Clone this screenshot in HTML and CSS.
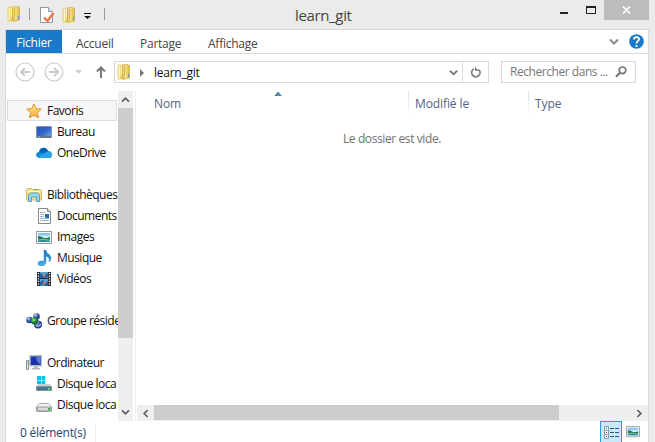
FILE: index.html
```html
<!DOCTYPE html>
<html lang="fr">
<head>
<meta charset="utf-8">
<title>learn_git</title>
<link rel="stylesheet" href="styles.css">
</head>
<body>
<svg class="defs" aria-hidden="true">
  <defs>
    <linearGradient id="gold" x2="1"><stop stop-color="#f8e9a2"/><stop offset=".6" stop-color="#efd570"/><stop offset="1" stop-color="#d9b445"/></linearGradient>
    <linearGradient id="screen" x2="1" y2="1"><stop stop-color="#2856b5"/><stop offset=".5" stop-color="#2f66c8"/><stop offset="1" stop-color="#7fb0e4"/></linearGradient>
    <linearGradient id="land" x2="0" y2="1"><stop stop-color="#6db7ee"/><stop offset=".5" stop-color="#e2f4fa"/><stop offset=".52" stop-color="#27714c"/><stop offset=".72" stop-color="#378e67"/><stop offset="1" stop-color="#2686b8"/></linearGradient>
    <linearGradient id="star" x2="0" y2="1"><stop stop-color="#fff29a"/><stop offset="1" stop-color="#f9a832"/></linearGradient>
    <linearGradient id="note" x2="0" y2="1"><stop stop-color="#1976bd"/><stop offset="1" stop-color="#43b5ee"/></linearGradient>
    <radialGradient id="green" cx=".4" cy=".35"><stop stop-color="#b4efab"/><stop offset=".5" stop-color="#36a544"/><stop offset="1" stop-color="#12652a"/></radialGradient>
    <radialGradient id="blue" cx=".35" cy=".3"><stop stop-color="#d9e6fb"/><stop offset=".5" stop-color="#5378c4"/><stop offset="1" stop-color="#243e91"/></radialGradient>
    <symbol id="folder" viewBox="0 0 14 16">
      <path d="M1 1h5v14H1z" fill="url(#gold)" stroke="#e1c566" stroke-width=".7"/>
      <path d="M6 1l2-.7 4.500 1V14L6 15.500z" fill="url(#gold)" stroke="#d0a83e" stroke-width=".7"/>
      <path d="M2.500 2v12M4.500 1.500v9" stroke="#fff6c9"/><path d="M7.500 2v8l-1 5" stroke="#d9b64f" fill="none"/><path d="M11 10h1v3h-1z" fill="#45a6dc"/>
    </symbol>
    <symbol id="picture" viewBox="0 0 16 14"><path d="M.5.5h15v12H.5z" fill="#fff" stroke="#9299a2"/><path d="M2 2h12v9H2z" fill="url(#land)"/><path d="M2 5q3 0 5 1.500t7-.5v2H2z" fill="#277953"/><path d="M2 9q6-1.500 12 .5" stroke="#74cbb3" fill="none"/></symbol>
    <symbol id="chev" viewBox="0 0 10 8"><path d="M1 1.500l4 4 4-4" fill="none" stroke="currentColor" stroke-width="2"/></symbol>
  </defs>
</svg>
<header class="titlebar">
  <div class="quick">
    <svg class="q-folder" viewBox="0 0 14 16"><use href="#folder"/></svg>
    <i class="bar bar-a"></i>
    <svg class="q-props" viewBox="0 0 16 16"><path d="M1.500.5h8l4 4v11h-12z" fill="#fafcfd" stroke="#96999c"/><path d="M9.500.5v4h4" fill="#e6e9ec" stroke="#96999c"/><path d="M5 10.500l3.500 3.500 6-8" fill="none" stroke="#ed774b" stroke-width="2.400"/></svg>
    <svg class="q-new" viewBox="0 0 14 16"><use href="#folder"/></svg>
    <svg class="q-more" viewBox="0 0 7 6"><path d="M0 0h7v1H0zM0 3h7L3.500 6z" fill="#111"/></svg>
    <i class="bar"></i>
  </div>
  <h1>learn_git</h1>
  <div class="controls">
    <i class="min"></i><i class="max"></i>
    <span class="close"><svg width="9" height="8" viewBox="0 0 9 8"><path d="M1 .5l7 7M8 .5l-7 7" stroke="#fff" stroke-width="1.700"/></svg></span>
  </div>
</header>
<main class="window">
  <nav class="ribbon">
    <span class="file">Fichier</span><span class="tab t1">Accueil</span><span class="tab t2">Partage</span><span class="tab t3">Affichage</span>
    <svg class="fold" width="10" height="8"><use href="#chev"/></svg>
    <svg class="help" width="15" height="15" viewBox="0 0 15 15"><circle cx="7.500" cy="7.500" r="7.300" fill="#1979ca"/><path d="M5 5.400C5 2.300 10 2.300 10 5.200 10 7.200 7.500 7 7.500 9.500M7.500 11v2" fill="none" stroke="#fff" stroke-width="1.800"/></svg>
  </nav>
  <div class="navbar">
    <svg class="back" width="20" height="20" viewBox="0 0 20 20"><g fill="none" stroke="#cbcbcb"><circle cx="10" cy="10" r="9" stroke-width="1.200"/><path d="M15 10H6M10 6l-4 4 4 4" stroke-width="2"/></g></svg>
    <svg class="forward" width="20" height="20" viewBox="0 0 20 20"><g fill="none" stroke="#cbcbcb"><circle cx="10" cy="10" r="9" stroke-width="1.200"/><path d="M5 10h9M10 6l4 4-4 4" stroke-width="2"/></g></svg>
    <svg class="recent" width="7" height="4" viewBox="0 0 7 4"><path d="M0 0h7L3.500 4z" fill="#cfcfcf"/></svg>
    <svg class="up" width="10" height="12" viewBox="0 0 10 12"><path d="M5 12V2M1 5.500l4-4 4 4" stroke="#777" stroke-width="2" fill="none"/></svg>
    <div class="address">
      <svg class="a-folder" viewBox="0 0 14 16"><use href="#folder"/></svg>
      <svg class="a-arrow" width="4" height="8" viewBox="0 0 4 8"><path d="M0 0l4 4-4 4z" fill="#777"/></svg>
      <span class="path">learn_git</span>
      <svg class="a-drop" width="9" height="8" viewBox="0 0 10 8"><use href="#chev"/></svg>
      <span class="refresh"><svg width="12" height="12" viewBox="0 0 12 12"><path d="M9.500 4.500A4.200 4.200 0 1 1 4 2.800" fill="none" stroke="#808080" stroke-width="1.700"/><path d="M5 0v5h5V3.500H7z" fill="#808080"/></svg></span>
    </div>
    <div class="search"><span>Rechercher dans ...</span><svg width="12" height="12" viewBox="0 0 12 12"><circle cx="7.500" cy="4.300" r="3.300" fill="none" stroke="#777" stroke-width="1.700"/><path d="M5 6.800L1 10.800" stroke="#777" stroke-width="2.200"/></svg></div>
  </div>
  <div class="content">
    <aside class="tree">
      <div class="row root active"><svg viewBox="0 0 16 16"><path d="M8 .8l2.100 4.800 5.200.5-3.900 3.500 1.200 5.200L8 12.100l-4.600 2.700 1.200-5.200L.7 6.100l5.200-.5z" fill="url(#star)" stroke="#e19132"/></svg><span>Favoris</span></div>
      <div class="row"><svg viewBox="0 0 16 16"><path d="M.5 2.500h15v11H.5z" fill="url(#screen)" stroke="#8996ad"/><path d="M1 12h14v2H1z" fill="#66718a"/><path d="M2 13h2" stroke="#8ec2d6"/></svg><span>Bureau</span></div>
      <div class="row"><svg viewBox="0 0 16 16"><path d="M3 7C4 2 10 1 12 6q4 0 4 4 0 3-3 3H4c-5 0-5-6-1-6z" fill="#1689d8"/><path d="M3 7c1-5 7-6 9-1L9 9z" fill="#0961b5"/><path d="M2 12l8-5q5-2 6 3 0 3-3 3H4z" fill="#27a3e8"/></svg><span>OneDrive</span></div>
      <div class="gap"></div>
      <div class="row root"><svg viewBox="0 0 16 16"><path d="M.5 13V2.500l1-1h4l1 1h8l1 1V13z" fill="#f6df87" stroke="#d9bb61"/><path d="M1 4.500h14" stroke="#fffbd0"/><path d="M8 2.500h3" stroke="#58a655"/><path d="M2.500 14.500V8l2-2h7l2 2v6.500h-3V10h-5v4.500z" fill="#9bd6f1" stroke="#529ecb"/></svg><span>Bibliothèques</span></div>
      <div class="row"><svg viewBox="0 0 16 16"><path d="M2.500.5h9l3 3v12h-12z" fill="#fff" stroke="#888"/><path d="M11.500.5v3h3" fill="#ddd" stroke="#888"/><path d="M4 4.500h5M4 6.500h4M4 8.500h4M4 10.500h9M4 12.500h9" stroke="#a6b5cc"/><path d="M9 6h4v4H9z" fill="#2870a8"/></svg><span>Documents</span></div>
      <div class="row"><svg viewBox="0 0 16 16"><use href="#picture" y="2" width="16" height="14"/></svg><span>Images</span></div>
      <div class="row"><svg viewBox="0 0 16 16"><path d="M8 0h2c0 4 5 4 5 8 0 2-1 3-2 4 1-4-1-5-3-6v6c0 2-2 4-5 4-4 0-4-5 0-5 2 0 3 0 3 .5z" fill="url(#note)" stroke="#3483b3" stroke-width=".5"/></svg><span>Musique</span></div>
      <div class="row"><svg viewBox="0 0 16 16"><path d="M1 1h14v14H1z" fill="#252c35"/><path d="M4 1h8v6H4zM4 8h8v7H4z" fill="#5b9fcd"/><path d="M4 2l4 3 4-3v4L9 7H4zM4 11l3-2 2 3 3-2v5H9l-2-2-3 2z" fill="#285f98"/><path d="M7 4l2-1v3H7zM7 11h3v2H7z" fill="#b88175"/><path d="M2.500 2v13M13.500 2v13" stroke="#f5f5f5" stroke-width="1.300" stroke-dasharray="1.300 1.300"/></svg><span>Vidéos</span></div>
      <div class="gap"></div>
      <div class="row root"><svg viewBox="0 0 16 16"><circle cx="3.500" cy="7" r="3.300" fill="url(#blue)"/><circle cx="10.500" cy="3.500" r="3.300" fill="url(#blue)"/><circle cx="12" cy="11.500" r="4" fill="url(#blue)"/><circle cx="8.500" cy="8" r="3.600" fill="url(#green)"/><path d="M10 13q4 1 5-2" stroke="#dce8fb" fill="none"/></svg><span>Groupe réside</span></div>
      <div class="gap"></div>
      <div class="row root"><svg viewBox="0 0 16 16"><path d="M.5 5.500h2v9h-2z" fill="#eee" stroke="#8b929a"/><path d="M1 8h1" stroke="#45a86e"/><path d="M4 .8h11.500v10H4z" fill="#1a33ac" stroke="#b5bbc3" stroke-width="1.500"/><path d="M10 2h4.500v7.500q-4-2-4.500-7.500z" fill="#5879d4"/><path d="M8 11.500h4V13h2v1.500H6V13h2z" fill="#aeb5be"/></svg><span>Ordinateur</span></div>
      <div class="row"><svg viewBox="0 0 16 16"><path d="M1 0h4v4H1zM5.500 0h3.800v4H5.500zM1 4.500h4V8H1zM5.500 4.500h3.800V8H5.500z" fill="#17bdf0"/><path d="M2 8h12l2 3v4H0v-4z" fill="#c9d0d3"/><path d="M.5 10.500h15v4H.5z" fill="#48788a" stroke="#80949b"/><path d="M12 12h2v2h-2z" fill="#53d66b"/></svg><span>Disque loca</span></div>
      <div class="row"><svg viewBox="0 0 16 16"><path d="M3.500 6.500h9l3 3v4q0 1-1 1h-13q-1 0-1-1v-4z" fill="#f2f2f2" stroke="#aaa"/><path d="M1 10h14v4H1z" fill="#dadada" stroke="#777" stroke-width=".7"/><path d="M12 11h2v2h-2z" fill="#2cae49"/></svg><span>Disque loca</span></div>
    </aside>
    <div class="vscroll"><span><svg class="flip" width="9" height="7" viewBox="0 0 10 8"><use href="#chev"/></svg></span><i></i><span class="down"><svg width="9" height="7" viewBox="0 0 10 8"><use href="#chev"/></svg></span></div>
    <section class="files">
      <div class="columns"><span class="name">Nom<svg width="7" height="4" viewBox="0 0 7 4"><path d="M0 4l3.500-4L7 4z" fill="#4f91b5"/><path d="M0 4l3.500-4" stroke="#244765"/></svg></span><span class="modified">Modifié le</span><span class="type">Type</span></div>
      <p class="empty"><span>Le dossier est vide.</span></p>
      <div class="hscroll"><span><svg class="left" width="9" height="7" viewBox="0 0 10 8"><use href="#chev"/></svg></span><i></i><span class="end"><svg class="right" width="9" height="7" viewBox="0 0 10 8"><use href="#chev"/></svg></span></div>
    </section>
  </div>
  <footer class="status"><span class="count">0 élément(s)</span>
    <div class="details"><svg width="16" height="13" viewBox="0 0 16 13"><path d="M.5.5h4v12h-4zM.5 4.500h4M.5 8.500h4" fill="#fff" stroke="#8b9aa6"/><path d="M2 2h1v1H2zM2 10h1v1H2z" fill="#234a78"/><path d="M2 6h1v1H2z" fill="#b32929"/><path d="M6 2.500h4M11 2.500h4M6 6.500h4M11 6.500h4M6 10.500h4M11 10.500h4" stroke="#345774"/></svg></div>
    <svg class="thumbs" width="14" height="12" viewBox="0 0 16 14" preserveAspectRatio="none"><use href="#picture"/></svg>
  </footer>
</main>
</body>
</html>
```
FILE: styles.css
```css
* { box-sizing: border-box; }
body { margin: 0; width: 655px; height: 442px; overflow: hidden; background: #ebebeb; color: #111; font: 12px/20px "Open Sans", "Noto Sans", sans-serif; letter-spacing: -.25px; }
svg { display: block; flex: none; }
.defs { width: 0; height: 0; position: absolute; }
.titlebar { height: 29px; display: grid; grid-template-columns: 223px 1fr 107px; }
.quick { display: flex; align-items: flex-start; padding: 6px 0 0 7px; }
.bar { width: 1px; height: 12px; margin-top: 2px; background: #999; }
.q-folder, .q-new, .a-folder { width: 14px; height: 16px; }
.bar-a { margin-left: 8px; }
.q-props { width: 16px; height: 16px; margin: 1px 0 0 9px; }
.q-new { margin: 1px 0 0 7px; }
.q-more { width: 7px; height: 6px; margin: 7px 13px 0 8px; }
h1 { margin: 4px 0 0 72px; font-size: 15px; line-height: 22px; font-weight: 400; letter-spacing: -.35px; color: #444; }
.controls { display: flex; margin-left: 12px; }
.min { width: 8px; height: 2px; margin: 12px 18px 0 0; background: #222; }
.max { width: 10px; height: 8px; margin: 6px 8px 0 0; border: 1px solid #222; border-top-width: 2px; }
.close { width: 45px; height: 20px; background: #bcbcbc; display: grid; place-items: center; }
.window { width: 644px; height: 413px; margin-left: 5px; border: solid #d9d9d9; border-width: 1px 1px 0; background: #fff; }
.ribbon { height: 24px; display: flex; border-bottom: 1px solid #d9d9d9; color: #444; line-height: 27px; }
.file { width: 56px; height: 23px; line-height: 25px; color: #fff; background: #1979ca; text-align: center; }
.t1 { width: 64px; padding-left: 14px; }
.t2 { width: 82px; padding-left: 14px; }
.t3 { width: 90px; }
.fold { margin: 8px 10px 0 auto; color: #8b8b8b; }
.help { margin: 4px 4px 0 0; }
.navbar { display: flex; height: 37px; padding-top: 7px; }
.back { margin: 1px 0 0 9px; }
.forward { margin: 1px 0 0 9px; }
.recent { margin: 9px 0 0 11px; }
.up { margin: 5px 0 0 14px; }
.address { width: 375px; height: 22px; margin-left: 8px; border: 1px solid #d9d9d9; display: flex; }
.a-folder { margin: 2px 0 0 2px; }
.a-arrow { margin: 7px 0 0 9px; }
.path { margin-left: 10px; color: #111; line-height: 21px; }
.a-drop { margin: 7px 4px 0 auto; color: #777; }
.refresh { width: 26px; border-left: 1px solid #d9d9d9; display: grid; place-items: center; }
.search { width: 135px; height: 22px; margin-left: 12px; padding: 0 8px; border: 1px solid #d9d9d9; display: flex; justify-content: space-between; align-items: center; color: #777; white-space: nowrap; letter-spacing: -.45px; }
.content { display: grid; grid-template-columns: 112px 16px 1fr; height: 330px; }
.tree { width: 112px; padding: 9px 0 0 1px; overflow: hidden; letter-spacing: -.5px; }
.row { height: 21px; display: flex; align-items: center; gap: 5px; padding-left: 29px; white-space: nowrap; }
.row svg { width: 16px; height: 16px; }
.row.root { padding-left: 19px; }
.active { width: 110px; background: #f7f7f7; border: 1px solid #dedede; }
.row.active { padding-left: 18px; }
.gap { height: 21px; }
.vscroll { display: flex; flex-direction: column; background: #efefef; width: 15px; }
.vscroll span { height: 17px; display: grid; place-items: center; }
.vscroll i { height: 230px; background: #cdcdcd; }
.vscroll .down { margin-top: auto; }
.vscroll, .hscroll { color: #606060; }
.flip { transform: rotate(180deg); }
.left { transform: rotate(90deg); }
.right { transform: rotate(-90deg); }
.files { display: flex; flex-direction: column; margin-left: 1px; padding-left: 1px; border-left: 1px solid #eee; }
.columns { display: grid; grid-template-columns: 271px 120px 1fr; height: 25px; line-height: 26px; color: #526482; letter-spacing: -.1px; }
.name { display: flex; padding-left: 17px; }
.name svg { margin: 1px 0 0 94px; }
.modified, .type { padding-left: 6px; border: 0 solid; border-left-width: 1px; border-image: linear-gradient(#cfe0f2, #fff) 1; }
.empty { margin: 13px 0 0; color: #707070; display: flex; padding-left: 206px; letter-spacing: -.4px; }
.hscroll { height: 16px; margin-top: auto; display: flex; background: #efefef; }
.hscroll span { width: 17px; display: grid; place-items: center; }
.hscroll i { width: 405px; background: #cdcdcd; height: 15px; }
.hscroll .end { margin-left: auto; }
.status { height: 22px; display: flex; color: #24456d; }
.count { width: 90px; height: 20px; margin-top: 2px; padding-left: 14px; border-right: 1px solid #eee; }
.details { width: 22px; height: 23px; margin-left: 504px; padding: 4px 0 0 3px; background: #cbe8f6; border: 1px solid #26a0da; }
.thumbs { margin: 5px 0 0 4px; }
```
